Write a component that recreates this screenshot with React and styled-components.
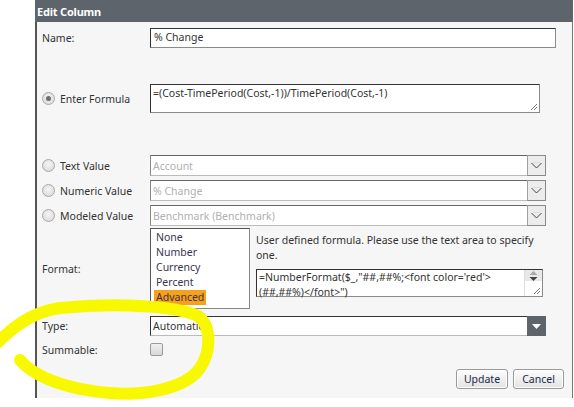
import React from 'react';
import styled, { createGlobalStyle } from 'styled-components';

const GlobalStyle = createGlobalStyle`
    html, body {
        margin: 0;
        padding: 0;
        background: #ffffff;
    }
    body {
        font-family: "Noto Sans", "Open Sans", sans-serif;
        font-size: 10.5px;
        color: #333;
    }
`;

const Page = styled.div`
    position: relative;
    width: 574px;
    height: 407px;
    overflow: hidden;
`;

const Dialog = styled.div`
    margin-left: 35px;
    width: 538px;
    display: flex;
    flex-direction: column;
`;

const Header = styled.div`
    height: 22px;
    background: #5d646c;
    color: #fff;
    font-weight: bold;
    font-size: 11px;
    letter-spacing: -0.2px;
    display: flex;
    align-items: center;
    padding-left: 2px;
`;

const Body = styled.div`
    background: #f6f6f6;
    border-left: 2px solid #555;
    border-right: 1px solid #777;
    padding: 6px 8px 9px 0;
    display: flex;
    flex-direction: column;
`;

const Row = styled.div`
    display: flex;
    align-items: center;
    margin-top: ${p => p.$mt || 0}px;
    height: ${p => (p.$h ? `${p.$h}px` : 'auto')};
    justify-content: ${p => p.$justify || 'flex-start'};
`;

const Label = styled.div`
    width: 108px;
    padding-left: 5px;
    display: flex;
    align-items: center;
    color: #333;
    flex-shrink: 0;
`;

const Radio = styled.span`
    width: 11px;
    height: 11px;
    border-radius: 50%;
    border: 1px solid #a8a8a8;
    background: radial-gradient(circle at 50% 40%, #f4f4f4, #d6d6d6);
    margin-right: 5px;
    display: inline-flex;
    align-items: center;
    justify-content: center;

    &::after {
        content: '';
        width: 5px;
        height: 5px;
        border-radius: 50%;
        background: ${p => (p.$checked ? '#6d6d6d' : 'transparent')};
    }
`;

const TextInput = styled.div`
    box-sizing: border-box;
    width: ${p => p.$w}px;
    height: ${p => p.$h}px;
    background: #fff;
    border-top: 1px solid #333;
    border-left: 1px solid #333;
    border-right: 1px solid #8a8a8a;
    border-bottom: 1px solid #8a8a8a;
    padding: ${p => p.$pad || '2px 2px'};
    color: #333;
    position: relative;
    line-height: 14px;
    white-space: pre;
`;

const Grip = () => (
    <svg width="8" height="8" viewBox="0 0 8 8">
        <path d="M7 1 L1 7 M7 4 L4 7" stroke="#777" strokeWidth="1" />
    </svg>
);

const GripPos = styled.span`
    position: absolute;
    right: 1px;
    bottom: 1px;
    display: flex;
`;

const Select = styled.div`
    box-sizing: border-box;
    width: 396px;
    height: ${p => p.$h || 21}px;
    display: flex;
    background: #fff;
    border-top: 1px solid ${p => (p.$dark ? '#333' : '#666')};
    border-left: 1px solid ${p => (p.$dark ? '#333' : '#888')};
    border-bottom: 1px solid #bbb;
`;

const SelectText = styled.div`
    flex: 1;
    padding-left: 2px;
    display: flex;
    align-items: center;
    color: ${p => (p.$muted ? '#b0b0b0' : '#333')};
`;

const ArrowBox = styled.div`
    width: 19px;
    box-sizing: border-box;
    display: flex;
    align-items: center;
    justify-content: center;
    background: ${p => (p.$dark ? '#5d646c' : '#ececec')};
    border-left: 1px solid ${p => (p.$dark ? '#5d646c' : '#a0a0a0')};
    border-right: 1px solid ${p => (p.$dark ? '#5d646c' : '#8a8a8a')};
    margin-top: -1px;
    margin-bottom: -1px;
    border-top: 1px solid ${p => (p.$dark ? '#5d646c' : '#8a8a8a')};
    border-bottom: 1px solid ${p => (p.$dark ? '#5d646c' : '#8a8a8a')};
`;

const Chevron = () => (
    <svg width="11" height="7" viewBox="0 0 11 7">
        <path d="M0.5 1 L5.5 6 L10.5 1" fill="none" stroke="#444" strokeWidth="1" />
        <path d="M2 0.5 L9 0.5" stroke="#ddd" strokeWidth="1" />
    </svg>
);

const WhiteTriangle = () => (
    <svg width="9" height="5" viewBox="0 0 9 5">
        <path d="M0 0 L9 0 L4.5 5 Z" fill="#fff" />
    </svg>
);

const ListBox = styled.div`
    box-sizing: border-box;
    width: 100px;
    height: 81px;
    background: #fff;
    border: 1px solid #555;
    border-right-color: #888;
    border-bottom-color: #888;
    padding: 1px 0 0 3px;
    display: flex;
    flex-direction: column;
    flex-shrink: 0;
`;

const Option = styled.div`
    line-height: 15px;
    height: 15px;
    color: #3a3450;

    span {
        padding: 0 2px;
        display: inline-block;
        background: ${p => (p.$selected ? '#f7a01a' : 'transparent')};
    }
`;

const FormatSide = styled.div`
    margin-left: 6px;
    align-self: flex-start;
    display: flex;
    flex-direction: column;
`;

const Help = styled.div`
    line-height: 15px;
    padding-top: 5px;
    color: #333;
    white-space: nowrap;
`;

const FormatArea = styled.div`
    box-sizing: border-box;
    margin-top: 6px;
    width: 287px;
    height: 28px;
    background: #fff;
    border-top: 1px solid #333;
    border-left: 1px solid #333;
    border-right: 1px solid #8a8a8a;
    border-bottom: 1px solid #8a8a8a;
    display: flex;
`;

const FormatText = styled.div`
    flex: 1;
    padding: 0 2px;
    line-height: 15px;
    white-space: pre;
    color: #333;
`;

const ScrollBar = styled.div`
    width: 17px;
    border-left: 1px solid #ddd;
    display: flex;
    flex-direction: column;
    position: relative;
`;

const ScrollButtons = styled.div`
    height: 11px;
    background: #e8e8e8;
    display: flex;
    align-items: center;
    justify-content: center;
`;

const Checkbox = styled.span`
    display: inline-block;
    width: 11px;
    height: 11px;
    border: 1px solid #9a9a9a;
    border-radius: 2px;
    background: linear-gradient(#f0f0f0, #d8d8d8);
`;

const Button = styled.button`
    font-family: "Noto Sans", "Open Sans", sans-serif;
    font-size: 10.5px;
    color: #1e2a44;
    height: 20px;
    width: ${p => p.$w}px;
    padding: 0;
    margin-left: 5px;
    border: 1px solid #9a9a9a;
    border-radius: 3px;
    background: linear-gradient(#fdfdfd, #e2e2e2);
    box-shadow: inset 0 0 0 1px #fff;
    cursor: pointer;
`;

const Scribble = styled.svg`
    position: absolute;
    left: 0;
    top: 0;
    pointer-events: none;
`;

export default function App() {
    return (
        <Page>
            <GlobalStyle />
            <Dialog>
                <Header>Edit Column</Header>
                <Body>
                    <Row>
                        <Label>Name:</Label>
                        <TextInput $w={406} $h={20} $pad="1px 3px">% Change</TextInput>
                    </Row>

                    <Row $mt={36}>
                        <Label>
                            <Radio $checked />
                            Enter Formula
                        </Label>
                        <TextInput $w={390} $h={29} $pad="1px 2px">
                            =(Cost-TimePeriod(Cost,-1))/TimePeriod(Cost,-1)
                            <GripPos><Grip /></GripPos>
                        </TextInput>
                    </Row>

                    <Row $mt={42}>
                        <Label><Radio />Text Value</Label>
                        <Select>
                            <SelectText $muted>Account</SelectText>
                            <ArrowBox><Chevron /></ArrowBox>
                        </Select>
                    </Row>
                    <Row $mt={4}>
                        <Label><Radio />Numeric Value</Label>
                        <Select>
                            <SelectText $muted>% Change</SelectText>
                            <ArrowBox><Chevron /></ArrowBox>
                        </Select>
                    </Row>
                    <Row $mt={4}>
                        <Label><Radio />Modeled Value</Label>
                        <Select>
                            <SelectText $muted>Benchmark (Benchmark)</SelectText>
                            <ArrowBox><Chevron /></ArrowBox>
                        </Select>
                    </Row>

                    <Row $mt={2}>
                        <Label>Format:</Label>
                        <ListBox>
                            <Option><span>None</span></Option>
                            <Option><span>Number</span></Option>
                            <Option><span>Currency</span></Option>
                            <Option><span>Percent</span></Option>
                            <Option $selected><span>Advanced</span></Option>
                        </ListBox>
                        <FormatSide>
                            <Help>
                                User defined formula. Please use the text area to specify
                                <br />
                                one.
                            </Help>
                            <FormatArea>
                                <FormatText>{`=NumberFormat($_,"##,##%;<font color='red'>\n(##,##%)</font>")`}</FormatText>
                                <ScrollBar>
                                    <ScrollButtons>
                                        <svg width="9" height="10" viewBox="0 0 9 10">
                                            <path d="M0.5 4 L4.5 0 L8.5 4 Z" fill="#aaa" />
                                            <path d="M0.5 6 L4.5 10 L8.5 6 Z" fill="#444" />
                                        </svg>
                                    </ScrollButtons>
                                    <GripPos><Grip /></GripPos>
                                </ScrollBar>
                            </FormatArea>
                        </FormatSide>
                    </Row>

                    <Row $mt={7}>
                        <Label>Type:</Label>
                        <Select $h={20} $dark>
                            <SelectText>Automatic</SelectText>
                            <ArrowBox $dark><WhiteTriangle /></ArrowBox>
                        </Select>
                    </Row>

                    <Row $mt={7} $h={13}>
                        <Label>Summable:</Label>
                        <Checkbox />
                    </Row>

                    <Row $mt={13} $justify="flex-end">
                        <Button $w={52}>Update</Button>
                        <Button $w={51}>Cancel</Button>
                    </Row>
                </Body>
            </Dialog>

            <Scribble width="574" height="407" viewBox="0 0 574 407">
                <path
                    d="M-5 345 C 10 330, 30 312, 60 308 C 110 303, 175 305, 198 316 C 212 326, 211 352, 200 368 C 185 390, 140 396, 110 393 C 70 390, 35 378, 20 360"
                    fill="none"
                    stroke="#f8f800"
                    strokeWidth="12"
                    strokeLinecap="round"
                    strokeLinejoin="round"
                />
            </Scribble>
        </Page>
    );
}
